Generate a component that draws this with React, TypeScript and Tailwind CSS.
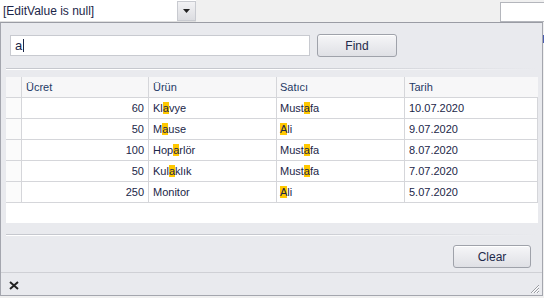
import React from 'react';

const ROWS = [
  { price: '60', product: ['Kl', 'a', 'vye'], seller: ['Must', 'a', 'fa'], date: '10.07.2020' },
  { price: '50', product: ['M', 'a', 'use'], seller: ['', 'A', 'li'], date: '9.07.2020' },
  { price: '100', product: ['Hop', 'a', 'rlör'], seller: ['Must', 'a', 'fa'], date: '8.07.2020' },
  { price: '50', product: ['Kul', 'a', 'klık'], seller: ['Must', 'a', 'fa'], date: '7.07.2020' },
  { price: '250', product: ['Monitor', '', ''], seller: ['', 'A', 'li'], date: '5.07.2020' },
];

const Hl = ({ parts }: { parts: string[] }) => (
  <span>
    {parts[0]}
    {parts[1] && <span className="bg-[#ffc800]">{parts[1]}</span>}
    {parts[2]}
  </span>
);

const Btn = ({ label, className }: { label: string; className: string }) => (
  <div
    className={`flex items-center justify-center rounded-[3px] border border-[#9fa2aa] bg-gradient-to-b from-[#f6f6f8] to-[#dfe0e5] text-[12px] text-[#1e2a4a] shadow-[inset_0_1px_0_#ffffff] ${className}`}
  >
    {label}
  </div>
);

const Separator = ({ className }: { className: string }) => (
  <div className={`flex flex-col ${className}`}>
    <div className="h-px bg-gradient-to-r from-[#c6c8ce] via-[#c6c8ce] to-transparent" />
    <div className="h-px bg-gradient-to-r from-white via-white to-transparent" />
  </div>
);

export default function App() {
  return (
    <div
      className="w-[544px] h-[298px] overflow-hidden bg-[#f0f0f0] text-[11px] text-[#1b2648]"
      style={{ fontFamily: '"Liberation Sans", Arial, sans-serif' }}
    >
      {/* combo row */}
      <div className="flex h-[22px]">
        <div className="flex w-[196px] h-[22px] bg-white border-b border-[#e0e0e0]">
          <div className="flex-1 flex items-center pl-[3px] text-[12px] text-[#1b2648]">[EditValue is null]</div>
          <div className="w-[19px] h-[20px] mt-px flex items-center justify-center bg-gradient-to-b from-[#f2f2f4] to-[#dcdde1] border border-[#c8cad0]">
            <svg width="7" height="4" viewBox="0 0 7 4">
              <path d="M0 0h7L3.5 4z" fill="#222" />
            </svg>
          </div>
        </div>
        <div className="flex-1" />
        <div className="w-[44px] h-[20px] mt-[2px] bg-white border border-[#b4b6bc] border-r-0" />
      </div>

      <div className="flex">
        {/* popup */}
        <div className="w-[543px] h-[274px] border border-[#a4a6ae] border-t-[#9a9ca4] bg-[#e9eaee] flex flex-col">
          <div className="flex items-start pt-[12px] pl-[9px]">
            <div className="w-[300px] h-[21px] bg-white border border-[#c8cad0] flex items-center pl-[4px] text-[13px] text-[#1b2648]">
              a<span className="w-px h-[13px] bg-[#1b2648] ml-px" />
            </div>
            <Btn label="Find" className="ml-[7px] -mt-px w-[80px] h-[23px]" />
          </div>

          <Separator className="mt-[11px] mx-[5px]" />

          {/* grid */}
          <div className="mt-[7px] ml-[5px] w-[532px] h-[146px] bg-white flex flex-col">
            <div className="flex h-[21px] bg-[#f7f7f8] border-b border-[#d5d6da] text-[#1e3a66]">
              <div className="w-[16px] border-r border-[#d5d6da]" />
              <div className="w-[127px] border-r border-[#d5d6da] flex items-center pl-[4px]">Ücret</div>
              <div className="w-[128px] border-r border-[#d5d6da] flex items-center pl-[4px]">Ürün</div>
              <div className="w-[128px] border-r border-[#d5d6da] flex items-center pl-[3px]">Satıcı</div>
              <div className="flex-1 flex items-center pl-[4px]">Tarih</div>
            </div>
            {ROWS.map((r, i) => (
              <div key={i} className="flex h-[21px] border-b border-[#d5d6da]">
                <div className="w-[16px] border-r border-[#d5d6da] bg-[#fbfbfb]" />
                <div className="w-[127px] border-r border-[#d5d6da] flex items-center justify-end pr-[4px]">{r.price}</div>
                <div className="w-[128px] border-r border-[#d5d6da] flex items-center pl-[4px]">
                  <Hl parts={r.product} />
                </div>
                <div className="w-[128px] border-r border-[#d5d6da] flex items-center pl-[3px]">
                  <Hl parts={r.seller} />
                </div>
                <div className="flex-1 flex items-center pl-[4px] border-r border-[#d5d6da]">{r.date}</div>
              </div>
            ))}
          </div>

          <Separator className="mt-[11px] mx-[5px]" />

          <div className="flex justify-end pr-[11px] pt-[9px] h-[36px]">
            <Btn label="Clear" className="w-[78px] h-[23px]" />
          </div>

          <div className="flex-1 border-t border-[#cfd0d5] flex items-center justify-between pl-[8px] pr-[2px]">
            <svg width="10" height="9" viewBox="0 0 10 9" className="mt-[2px]">
              <path d="M1 1l8 7M9 1L1 8" stroke="#222" strokeWidth="2" />
            </svg>
            <svg width="11" height="11" viewBox="0 0 11 11" className="self-end mb-[1px]">
              <path d="M10 2L2 10M10 5L5 10M10 8L8 10" stroke="#9a9ca2" strokeWidth="1" />
              <path d="M10 3L3 10M10 6L6 10M10 9L9 10" stroke="#ffffff" strokeWidth="1" />
            </svg>
          </div>
        </div>
        <div className="w-px">
          <div className="mt-[13px] h-[8px] bg-[#4a5cb0]" />
        </div>
      </div>
    </div>
  );
}
